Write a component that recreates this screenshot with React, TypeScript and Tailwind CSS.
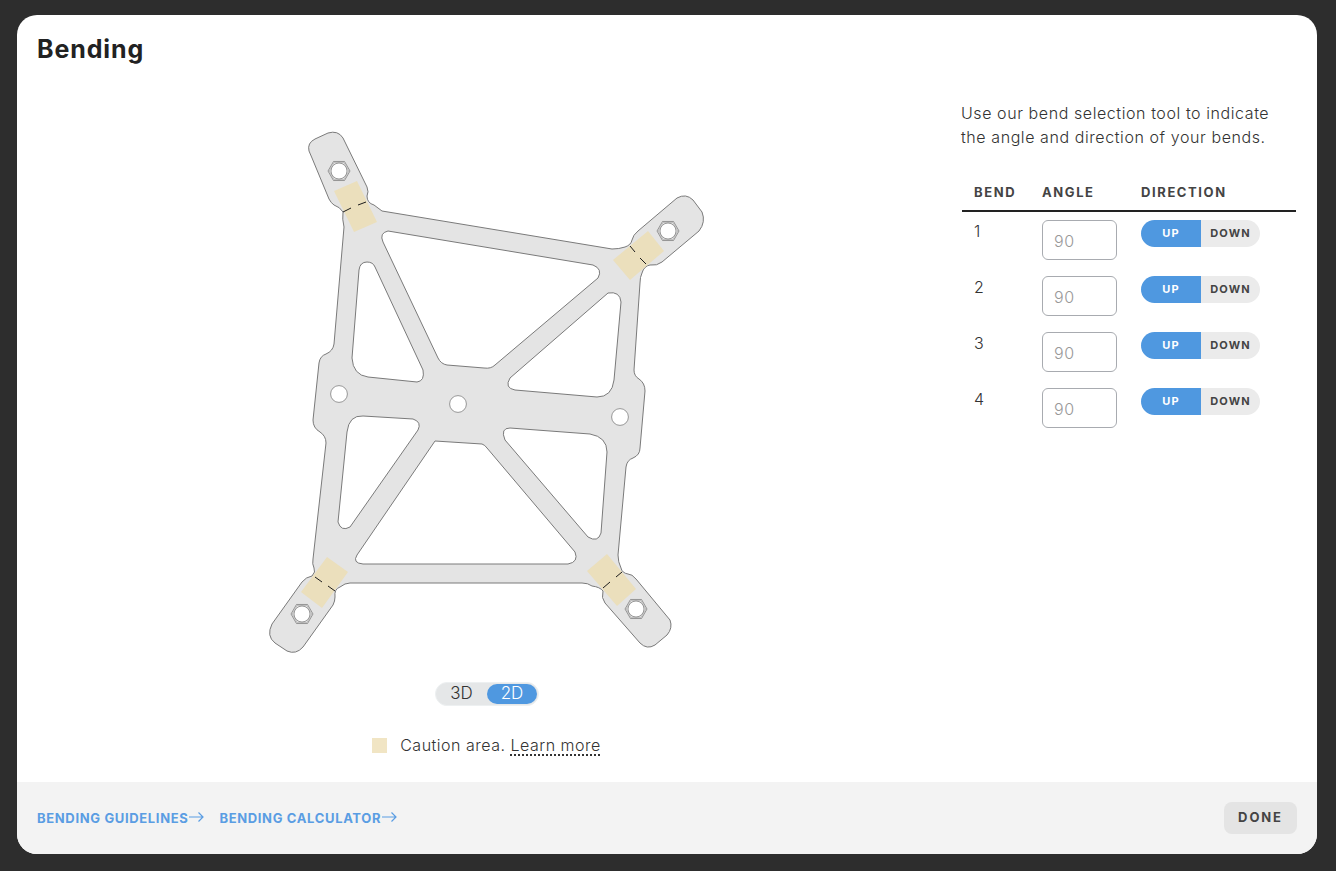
import React from 'react';

const FONT = "font-['Inter','Liberation_Sans',sans-serif]";

const OUTLINE =
  'M312 158 L309 151 Q307 143 315 139 L328 133 Q338 130 343 138 L367 187 Q369 192 367 196 Q367 203 374 205 Q378 208 382 211 L612 249 Q619 249 625 247 Q631 245 632 240 Q633 235 638 231 L677 198 Q686 193 693 200 L702 212 Q706 222 699 231 L662 262 Q657 266 650 265 Q644 266 642 273 Q640 277 640 283 L634 370 Q634 376 639 379 Q645 383 645 391 L640 448 Q640 455 633 458 Q627 460 626 467 L618 555 Q618 562 621 568 Q622 573 628 574 Q632 574 636 579 L670 620 Q673 628 667 635 L655 645 Q647 650 640 643 L605 603 Q601 598 603 591 Q600 587 592 586 Q588 583 582 583 L350 583 Q345 583 340 587 Q334 589 335 597 Q335 601 333 605 L303 647 Q296 655 287 651 L275 643 Q266 636 272 624 L302 582 Q306 577 312 576 Q316 572 314 568 Q312 564 313 559 L326 443 Q326 436 320 432 Q313 428 313 420 L319 363 Q320 356 326 354 Q333 351 334 344 L344 227 Q342 219 343 212 Q340 207 334 205 Q331 203 329 199 Z';

const HOLES = [
  'M383 242 Q379 233 388 231 L593 265 Q603 269 598 278 L495 365 Q491 369 484 368 L447 365 Q441 364 438 358 Z',
  'M359 270 Q360 262 367 262 Q373 262 375 267 L423 370 Q425 381 417 382 L368 377 Q353 375 352 358 Z',
  'M510 378 L608 293 Q620 291 621 302 L614 380 Q612 397 597 397 L515 390 Q504 388 510 378 Z',
  'M347 432 Q349 415 363 416 L413 419 Q422 422 418 430 L350 527 Q341 532 338 522 Z',
  'M435 441 L482 444 Q485 445 487 448 L575 552 Q579 562 568 564 L363 564 Q352 563 357 555 Z',
  'M505 440 Q500 428 510 428 L590 434 Q607 437 607 452 L601 533 Q598 543 588 537 Z',
];

const PATCHES = [
  '334,191 357,181 377,222 354,232',
  '613,260 648,231 664,251 630,280',
  '301,592 327,557 348,572 322,608',
  '587,571 607,554 636,589 617,606',
];

const BEND_LINES = [
  [343, 212, 351, 208],
  [358, 205, 366, 202],
  [630, 246, 635, 252],
  [640, 258, 646, 264],
  [315, 577, 322, 582],
  [328, 586, 335, 591],
  [616, 577, 622, 572],
  [603, 588, 610, 582],
];

const NUTS = [
  [339, 171],
  [668, 231],
  [302, 614],
  [636, 609],
];

const DRILLS = [
  [339, 394],
  [458, 404],
  [620, 417],
];

function hexPoints(cx: number, cy: number, r: number) {
  return [0, 60, 120, 180, 240, 300]
    .map((a) => {
      const t = (a * Math.PI) / 180;
      return `${cx + r * Math.cos(t)},${cy + r * Math.sin(t)}`;
    })
    .join(' ');
}

const BracketDrawing = () => (
  <svg width="450" height="535" viewBox="262 125 450 535" className="block">
    <path d={`${OUTLINE} ${HOLES.join(' ')}`} fill="#e4e4e4" fillRule="evenodd" stroke="#7a7a7a" strokeWidth="1" />
    {PATCHES.map((p) => (
      <polygon key={p} points={p} fill="#ebdfbc" />
    ))}
    {BEND_LINES.map(([x1, y1, x2, y2]) => (
      <line key={`${x1}-${y1}`} x1={x1} y1={y1} x2={x2} y2={y2} stroke="#1c1c1c" strokeWidth="1" />
    ))}
    {NUTS.map(([x, y]) => (
      <g key={`${x}-${y}`}>
        <polygon points={hexPoints(x, y, 11)} fill="#e4e4e4" stroke="#808080" strokeWidth="0.8" />
        <polygon points={hexPoints(x, y, 9.8)} fill="#e4e4e4" stroke="#aaa" strokeWidth="0.6" />
        <circle cx={x} cy={y} r="8" fill="#fff" stroke="#808080" strokeWidth="0.8" />
      </g>
    ))}
    {DRILLS.map(([x, y]) => (
      <circle key={`${x}-${y}`} cx={x} cy={y} r="8.4" fill="#fff" stroke="#808080" strokeWidth="0.8" />
    ))}
  </svg>
);

const Arrow = () => (
  <svg width="15" height="12" viewBox="0 0 15 12" fill="none" stroke="#5a9de3" strokeWidth="1.2" className="-mt-[5px] ml-px">
    <path d="M0 6 H14 M9.5 1.5 L14 6 L9.5 10.5" />
  </svg>
);

const FooterLink = ({ label }: { label: string }) => (
  <a className="flex items-center pt-[2px] text-[13px] font-bold text-[#5a9de3] tracking-[0.65px] whitespace-nowrap">
    {label}
    <Arrow />
  </a>
);

const BendRow = ({ n }: { n: number }) => (
  <div className="flex h-[56px] pt-2">
    <div className="w-[80px] pl-3 text-base font-light text-[#333] leading-[22px]">{n}</div>
    <input
      readOnly
      placeholder="90"
      className="w-[75px] h-10 pl-[11px] pt-px rounded-md border border-[#a8abb0] text-base font-light placeholder:text-[#999] tracking-[0.6px] outline-none"
    />
    <div className="ml-6 flex h-[27px] w-[119px] rounded-full overflow-hidden text-[11px] font-bold tracking-[1.1px]">
      <span className="w-[60px] bg-[#4f98e0] text-white flex items-center justify-center">UP</span>
      <span className="flex-1 bg-[#ebebeb] text-[#444] flex items-center justify-center">DOWN</span>
    </div>
  </div>
);

export default function App() {
  return (
    <div className={`${FONT} w-[1336px] h-[871px] bg-[#2d2d2d] pt-[15px] px-[17px] overflow-hidden`}>
      <div className="w-[1300px] h-[839px] bg-white rounded-[20px] overflow-hidden flex flex-col">
        <header className="h-[70px] pl-5 pt-[17px] shrink-0">
          <h2 className="text-[25px] leading-[34px] font-bold text-[#222] tracking-[0.9px]">Bending</h2>
        </header>

        <div className="flex flex-1">
          <div className="w-[940px] flex flex-col items-center pt-10">
            <BracketDrawing />
            <div className="mt-[22px] flex items-center w-[104px] h-6 rounded-full bg-[#e5e7e8] border border-[#edf0f1] text-[17px] font-light text-[#333]">
              <span className="w-[51px] text-center">3D</span>
              <span className="w-[50px] h-5 rounded-full bg-[#4f98e0] text-white flex items-center justify-center">2D</span>
            </div>
            <div className="mt-[30px] flex items-center text-base font-light text-[#333] leading-[18px] ml-[-1px]">
              <span className="w-[15px] h-[15px] bg-[#f1e5c4] mr-[13px]" />
              <span className="tracking-[0.5px]">
                Caution area.{' '}
                <span className="underline decoration-dotted decoration-2 underline-offset-[3px]">Learn more</span>
              </span>
            </div>
          </div>

          <div className="w-[335px] ml-1 pt-4">
            <p className="text-base font-light leading-6 text-[#333] tracking-[0.58px] whitespace-nowrap">
              Use our bend selection tool to indicate
              <br />
              the angle and direction of your bends.
            </p>
            <div className="ml-px mt-[31px] flex h-[32px] border-b-2 border-[#222] text-[13px] font-bold text-[#444] tracking-[1.6px] leading-6">
              <span className="w-[80px] pl-3">BEND</span>
              <span className="w-[99px]">ANGLE</span>
              <span>DIRECTION</span>
            </div>
            <div className="ml-px">
              {[1, 2, 3, 4].map((n) => (
                <BendRow key={n} n={n} />
              ))}
            </div>
          </div>
        </div>

        <footer className="h-[72px] shrink-0 bg-[#f3f3f3] flex items-center pl-5 pr-5 gap-[15px]">
          <FooterLink label="BENDING GUIDELINES" />
          <FooterLink label="BENDING CALCULATOR" />
          <button className="ml-auto w-[73px] h-8 rounded-lg bg-[#e4e4e4] text-[13px] font-bold tracking-[1.9px] text-[#444]">
            DONE
          </button>
        </footer>
      </div>
    </div>
  );
}
